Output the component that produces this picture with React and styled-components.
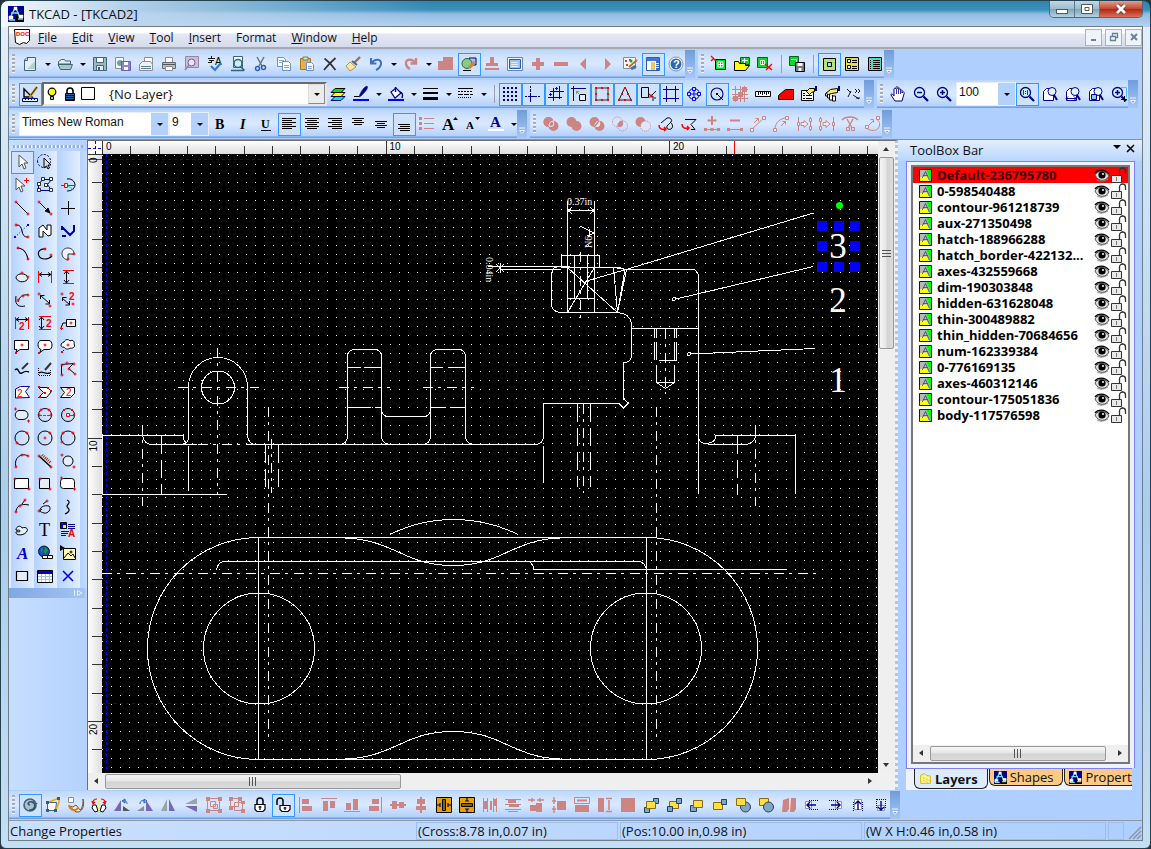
import * as React from "react";
import styled, { createGlobalStyle } from "styled-components";

const GlobalStyle = createGlobalStyle`
    * {
        box-sizing: border-box;
    }
    body {
        margin: 0;
        background: #26323c;
        font-family: "Open Sans", "Noto Sans", sans-serif;
        font-size: 12px;
        color: #111;
    }
    button, select {
        font: inherit;
        color: inherit;
    }
`;

/* ---------- icon drawing ---------- */

const K = "#000";
const N = "#00008c";
const B = "#0000ff";
const R = "#ff0000";
const D = "#cc8583";
const S = "#3f6578";
const L = "#e4eef6";
const W = "#fff";
const Y = "#ffff00";
const GR = "#8a8f96";
const GN = "#00e020";
const VI = "#6a5fa0";
const NO = "none";

const circ = (x, y, r) => `M${x - r} ${y}a${r} ${r} 0 1 0 ${2 * r} 0a${r} ${r} 0 1 0 ${-2 * r} 0z`;
const box = (x, y, w, h) => `M${x} ${y}h${w}v${h}h${-w}z`;
const dots = (points, c = R) => [points.map(([x, y]) => box(x - 1, y - 1, 2, 2)).join(""), NO, c];
const plus = (points) => [points.map(([x, y]) => box(x - 1.5, y - 0.5, 3, 1) + box(x - 0.5, y - 1.5, 1, 3)).join(""), NO, R];

// every entry is [path, stroke, fill, stroke width] or a letter { t, x, y, s, c }
const lens = [
    [circ(6.5, 6.5, 5), N, "#c9f0f4", 1.3],
    ["M10.5 10.5L15 15", N, NO, 2.2],
];
const libBox = [
    [box(4.5, 3.5, 10, 10), K, GN],
    ["M7 6h5v5H7zM9.5 6v5M7 8.5h5", W, "#20a040"],
];
const pageLens = [
    ["M4.500 2.500h7v12h-10v-9z", N, W],
    [circ(10, 5.5, 4), N, "#dff6fa", 1],
    ["M12 9l3 5", N, NO, 2],
];
const yellowBox = (x, y) => [box(x + 0.5, y + 0.5, 9, 7), "#8a6a10", "#ffe040"];
const blueBox = (x, y, s = 5) => [box(x + 0.5, y + 0.5, s - 1, s - 1), "#20425c", "#7fa6c4"];

const icons = {
    newDoc: [["M5 1.500h8.500v13h-11V4z", S, L], ["M2.500 4.500H5.500V1.500", S, NO], ["M5 13h8V5z", NO, "#b4d0cc"]],
    open: [["M1.500 5.500l3-2h3l1 1.500h5v3H1.500z", S, "#dfeeee"], ["M4 8.500h11.500l-2 5H3.500L1 8.500z", S, "#a8c8c4"]],
    save: [[box(1.5, 1.5, 13, 13), S, "#9db9c2"], [box(4.5, 1.5, 7, 5), S, W], [box(4.5, 9.5, 7, 5), S, L], [box(6, 11, 2, 3), NO, S]],
    saveAs: [[box(0.5, 1.5, 8, 11), GR, W], [circ(5, 7, 3), NO, "#6aa0b0"], [box(6.5, 5.5, 9, 9), VI, "#8c86c8"], [box(9, 6, 4, 3) + box(9, 11, 4, 3), NO, W]],
    mail: [["M6.500 1.500h8v7h-8z", GR, W], ["M1.500 8.500l3-3h8l2 3v6h-13z", GR, "#eef2f4"], ["M3 10.500h10M3 12.500h10", "#5b8090", NO]],
    print: [[box(4.5, 1.5, 7, 5), GR, W], [box(1.5, 6.5, 13, 6), "#667", "#b9c0ca"], [box(4.5, 10.5, 7, 4), GR, W], [box(2, 8, 12, 1), NO, "#555"]],
    preview: [[box(1.5, 0.5, 13, 11), "#9a84a4", "#c9bfd8"], [circ(7.5, 6.5, 3.5), VI, "#eae4f4"], ["M5 9l-4 5", "#9a88a8", NO, 2]],
    spell: [["M1 2.500h7M4.500 0v3M2 4.500h5M4.500 5v2M1 6.500h3", K, NO, 0.9], { t: "A", x: 8, y: 9, s: 10, c: K }, ["M4 10l4 4 6-7", "#3a78c8", NO, 2.2]],
    search: [[box(3.5, 0.5, 9, 11), S, W], [circ(8, 7.5, 4), "#2d6585", "#cdeef6", 1.5], ["M10.500 10.500l4 4M1 14.500h13", "#2d6585", NO, 1.6]],
    cut: [["M4 1l5 9M11 1L6 10", "#6b7480", NO, 1.5], [circ(4.5, 12.5, 2), "#2f60b0", NO, 1.5], [circ(10.5, 11.5, 2), "#2f60b0", NO, 1.5]],
    copy: [["M1.500 1.500h6l2 2v7h-8z", "#6a90c8", W], ["M6.500 5.500h6l2 2v7h-8z", "#6a90c8", W], ["M3 4.500h5M3 6.500h4M8 9.500h5M8 11.500h5", "#7fa6de", NO]],
    paste: [[box(1.5, 2.5, 10, 11), "#a87418", "#e8b048"], [box(4, 1, 5, 3), "#777", "#ddd"], ["M7.500 6.500h5l2 2v6h-7z", "#6a90c8", W], ["M9 10.500h4M9 12.500h4", "#7fa6de", NO]],
    remove: [["M2.500 2.500C6 5 10 9 13.500 14M13.500 2C10 5 6 9 2 14", "#333", NO, 1.7]],
    brush: [["M15 1l-6 6", "#a87038", NO, 2.4], ["M5 6l6 5-6 4-4-5z", "#b9923a", "#ffe8a0"], ["M7 5l5 4", "#4a6a88", NO, 2]],
    undo: [["M3 2v5.500h5.500M3.500 7C7 2 14 3 13 8c-.5 3-3 5-5 6", "#3c70c8", NO, 2]],
    redo: [["M13 2v5.500H7.500M12.500 7C9 2 2 3 3 8c.5 3 2 4 4 5", D, NO, 2.4]],
    folderOff: [["M0 5h5V1h10v13H0z", NO, D]],
    render: [[box(8, 2, 7, 7), N, "#a8c4f0"], [circ(6, 7.5, 5), "#286838", "#8cc88c"], ["M14 6l-6 6", "#c88838", NO, 3], ["M2 14.500h8", K, NO]],
    stamp: [["M6 1h4v6h4v3H2V7h4zM1 12h14v2H1z", NO, D]],
    monitor: [[box(0.5, 1.5, 15, 13), "#6886ac", "#f2f6fc"], [box(2.5, 3.5, 11, 9), "#2a5cab", "#9cc2f4"], ["M4 6.500h7M4 8.500h7M4 10.500h7", W, NO, 0.7]],
    zoomInOff: [["M6 2h4v4h4v4h-4v4H6v-4H2V6h4z", NO, D]],
    zoomOutOff: [[box(1, 6, 14, 4), NO, D]],
    prev: [["M10 2v12L4 8z", NO, D]],
    next: [["M6 2v12l6-6z", NO, D]],
    options: [[box(1.5, 1.5, 12, 11), "#8090a0", "#f6f8fc"], [dots([[4, 5], [8, 4], [5, 9]])[0], NO, "#c84818"], [circ(9, 5, 1.5), NO, "#3c8a3c"], ["M15 4l-8 7", "#b07828", NO, 2], ["M9 13l5-3", "#4c70a8", NO, 3]],
    panel: [[box(1.5, 1.5, 13, 13), "#2a5cab", W], [box(2, 2, 12, 3), NO, "#3c78d8"], [box(11, 5, 3, 9), NO, "#3c70c0"], ["M11 7.500h3M11 9.500h3M11 11.500h3", Y, NO], [box(6, 6, 4, 8), NO, "#f0c860"]],
    help: [[circ(8, 8, 7), "#7894b4", W], [circ(8, 8, 5.5), NO, "#2a68b8"], { t: "?", x: 5, y: 12, s: 11, c: W, b: 1 }],
    addLib: [...libBox, ["M0 0l5 5M0 5l3-3", R, NO, 1.2]],
    openLib: [[box(6.5, 1.5, 9, 7), "#006020", GN], ["M8 4.500h6M10.500 2v6", W, NO], ["M.5 14.500v-9h4l1 2h6v2h4l-4 5z", K, Y]],
    delLib: [[box(0.5, 1.5, 10, 10), "#006020", GN], ["M3.500 4.500h4v4h-4zM5.500 4v5", W, "#20a040"], ["M8 8l7 6M15 8l-6 6", R, NO, 1.4]],
    saveLib: [[box(0.5, 0.5, 9, 9), "#006020", GN], ["M2 3.500h5.500V9", W, NO], [box(6.5, 6.5, 9, 9), K, "#777"], [box(8.5, 7, 5, 3) + box(9.5, 12, 3, 3), NO, W]],
    viewLarge: [[box(2.5, 2.5, 12, 12), K, "#b8e080"], [box(6.5, 6.5, 4, 4), K, "#80f0e8"]],
    viewSmall: [[box(1.5, 1.5, 13, 13), K, "#e8e038"], [box(3.5, 3.5, 3, 3) + box(3.5, 9.5, 3, 3), K, W], ["M8 4.500h5M8 6.500h5M8 10.500h5M8 12.500h5", K, NO]],
    viewList: [[box(1.5, 1.5, 13, 13), K, "#50d8c8"], ["M3 4.500h1M6 4.500h7M3 6.500h1M6 6.500h7M3 8.500h1M6 8.500h7M3 10.500h1M6 10.500h7M3 12.500h1M6 12.500h7", K, NO]],

    layerEdit: [["M2 3v8h8z", K, NO, 1.4], ["M15 1L9 9l-1 3", "#c09010", NO, 2.4], ["M15 1L9 9", K, NO, 0.7], [box(0.5, 12.5, 15, 3), N, "#dff"], ["M3.500 12v2M6.500 12v2M9.500 12v2M12.500 12v2", N, NO]],
    bulb: [[circ(8, 6, 3.8), K, Y, 1.2], [box(6.5, 10.5, 3, 3), K, "#d0c060"]],
    padlock: [["M5 7V5a3 3 0 016 0v2", K, NO, 1.6], [box(3.5, 7.5, 9, 7), K, "#1a60b0"], ["M4 9.500h8M4 11.500h8M4 13.500h8", K, NO, 0.8]],
    swatch: [[box(1.5, 1.5, 13, 12), K, W]],
    layers: [["M5 10.500h10l-4 4H1z", N, "#00e0e8"], ["M5 6.500h10l-4 4H1z", K, Y], ["M5 2.500h10l-4 4H1z", K, GN]],
    pen: [["M14 0c2 2-2 6-6 10l-2 1 1-3c2-4 4-7 7-8z", N, N, 0.5], ["M6 10.500H1", K, NO], [box(0, 13, 16, 2), NO, B]],
    bucket: [["M3 6l5-4 5 5-6 5z", N, W, 1.2], ["M7.500 6V1M12 6c3 1 3 3 2 6", N, NO, 1.5], [box(0, 13, 16, 2), NO, B]],
    lines: [["M0 2.500h15", K, NO], [box(0, 6, 15, 2) + box(0, 11, 15, 3), NO, K]],
    dashes: [["M0 2.500h15", K, NO], ["M0 5.500h2M3 5.500h2M6 5.500h2M9 5.500h2M12 5.500h2M0 11.500h1M2 11.500h1M4 11.500h1M6 11.500h1M8 11.500h1M10 11.500h1M12 11.500h1", K, NO], ["M0 8.500h5M6 8.500h5M12 8.500h3", K, NO]],
    grid: [[[0, 4, 8, 12].map((x) => [0, 4, 8, 12].map((y) => box(x + 1, y + 1, 2, 2)).join("")).join(""), NO, N]],
    guide: [["M5.500 0v2M5.500 3v3M5.500 7v9", N, NO], ["M0 10.500h2M3 10.500h9M13 10.500h2", N, NO]],
    snapGrid: [["M5.500 2v13M11.500 0v13M2 5.500h14M0 11.500h14", N, NO], [plus([[2.5, 8.5], [8.5, 2.5]])[0], NO, B]],
    snapCorner: [["M0 2.500h15M2.500 0v15", N, NO], [box(8.5, 8.5, 6, 6), K, L], ["M9 9L5 5M5.500 8V5.500h3", GR, NO]],
    nodes: [[box(2, 2, 12, 12), K, NO, 0.8], dots([[2, 2], [8, 2], [14, 2], [2, 8], [14, 8], [2, 14], [8, 14], [14, 14]])],
    triangle: [["M8 1L2 14h12z", K, NO, 0.9], dots([[8, 2], [5, 8], [11, 8], [2, 14], [8, 14], [14, 14]])],
    snapObject: [["M1.500 1.500h7v10h-7z", K, NO], ["M9 8l3 3M12 8v3H9", R, NO, 1.2], ["M16 5l-4 4M13 10v5M14 12h2", K, NO, 0.9]],
    frame: [["M3.500 0v16M12.500 0v16M0 3.500h16M0 12.500h16", N, NO]],
    wheel: [[circ(8, 8, 5.5), N, NO, 1], [[[8, 3], [8, 13], [3, 8], [13, 8]].map(([x, y]) => box(x - 1.5, y - 1.5, 3, 3)).join(""), B, "#cfe6ff"], ["M8 5v6M5 8h6", B, NO]],
    gauge: [[circ(8, 8, 6), N, NO, 1.1], ["M8 8l6 6", K, NO], dots([[8, 8]], K)],
    tiles: [["M0 3.500h16M0 8.500h16M0 12.500h16M3.500 0v16M8.500 0v16M12.500 0v16", D, NO], [box(1, 10, 5, 5) + box(10, 1, 5, 5) + box(6, 6, 5, 5), NO, D]],
    ruler: [[box(0.5, 5.5, 15, 5), K, W], ["M3.500 6v3M5.500 6v2M7.500 6v3M9.500 6v2M11.500 6v3M13.500 6v2", K, NO]],
    redShape: [["M.5 13.500v-4l7-6h8v10z", K, R]],
    card: [["M.5 4.500h12v10H.5z", K, W], ["M2 7.500h2M5 9.500h6M2 9.500h2M2 12.500h2M5 12.500h6", K, NO], ["M5.500 5.500l3-3h5v3l-3 1-2 2z", K, "#ffe860"], [box(14, 0, 2, 5), NO, N]],
    cards: [["M1.500 7.500l5-4 7-1v4l-6 1-3 1z", K, "#ffe860"], [box(14, 0, 2, 5), NO, N], ["M1.500 8v2h2v2h2v2h3v1h3v-5h-3M3.500 10V8M5.500 12V8M8.500 14V9", K, W]],
    shuffle: [["M0 3l4 4M4 5l-3 6M6 9l6 4M8 3l2 2-2 2M11 3l2 2-2 2M13 12H9", K, NO, 0.9]],
    hand: [["M5 15L1 9c0-2 2-1 3 1V3c0-1 1.600-1 2 0V2c0-2 2-2 2 0v1c0-2 2-1 2 0v1c1-1 2 0 2 1v2c1-2 3-1 2 1l-2 7z", N, W], ["M6.500 3v5M8.500 3v5M10.500 4v4", N, NO, 0.8]],
    zoomOut: [...lens, ["M4 6.500h5", N, NO, 1.5]],
    zoomIn: [...lens, ["M4 6.500h5M6.500 4v5", N, NO, 1.5]],
    zoomActual: [...lens, ["M4.500 4v5M8.500 4v5M6.500 5v1M6.500 7v1", N, NO, 0.8]],
    zoomPage: pageLens,
    zoomWidth: [...pageLens, ["M1 12.500h10M3 10.500l-2 2 2 2M9 10.500l2 2-2 2", N, NO]],
    zoomObjects: [...pageLens, [box(3.5, 8.5, 5, 5), N, "#8ce"]],
    zoomSelection: [...lens, ["M9.500 1.500h6v10", "#38c8f0", NO], ["M4 6.500h5M6.500 4v5", N, NO, 1.5], ["M10 13.500h6M13.500 10v6", K, NO]],

    bold: [{ t: "B", x: 3, y: 13, s: 14, c: K, b: 1, f: 1 }],
    italic: [{ t: "I", x: 5, y: 13, s: 14, c: K, b: 1, f: 1, i: 1 }],
    underline: [{ t: "U", x: 3, y: 12, s: 12, c: K, b: 1, f: 1 }, ["M3 14.500h10", K, NO]],
    alignLeft: [["M1 2.500h14M1 4.500h10M1 6.500h14M1 8.500h10M1 10.500h14M1 12.500h10", K, NO]],
    alignCenter: [["M1 2.500h14M3 4.500h10M1 6.500h14M3 8.500h10M1 10.500h14M3 12.500h10", K, NO]],
    alignRight: [["M1 2.500h14M5 4.500h10M1 6.500h14M5 8.500h10M1 10.500h14M5 12.500h10", K, NO]],
    vTop: [["M2 2.500h12M4 4.500h8M2 6.500h12M4 8.500h8", K, NO]],
    vMiddle: [["M2 5.500h12M4 7.500h8M2 9.500h12M4 11.500h8", K, NO]],
    vBottom: [["M2 8.500h12M4 10.500h10M2 12.500h12M4 14.500h10", K, NO]],
    bullets: [[box(0, 1, 3, 3) + box(0, 6, 3, 3) + box(0, 11, 3, 3) + box(5, 2, 10, 1) + box(5, 7, 10, 1) + box(5, 12, 10, 1), NO, D]],
    fontUp: [{ t: "A", x: 0, y: 14, s: 17, c: K, b: 1, f: 1 }, ["M11 4h5l-2.500-3z", NO, K]],
    fontDown: [{ t: "A", x: 1, y: 13, s: 11, c: K, b: 1, f: 1 }, ["M10 1h5l-2.500 3z", NO, K]],
    fontColor: [{ t: "A", x: 2, y: 11, s: 15, c: N, b: 1, f: 1 }, [box(0, 13, 16, 2), NO, W]],
    boolA: [[circ(5.5, 6, 5) + circ(10.5, 10, 5), NO, D], [circ(5.5, 6, 5), NO, D], ["M6 10a5 5 0 014-5 5 5 0 010 5 5 5 0 01-4 0z", L, D]],
    boolB: [[circ(5.5, 6, 5), NO, D], [circ(10.5, 10, 5), NO, D], [box(5, 5, 6, 6), NO, D]],
    boolC: [[circ(5.5, 6, 5), NO, D], [circ(10.5, 10, 5), NO, D], ["M6 10a5 5 0 014-5 5 5 0 010 5 5 5 0 01-4 0z", L, "#dfeafc"], ["M6 10l4-5", D, NO, 1.5]],
    boolD: [[circ(5.5, 6, 5), D, NO, 1, "1 1"], [circ(10.5, 10, 5), D, NO, 1, "1 1"], ["M6 10a5 5 0 014-5 5 5 0 010 5 5 5 0 01-4 0z", D, D]],
    boolE: [[circ(5.5, 6, 5), NO, D], [circ(10.5, 10, 5), D, "#dce9fd", 1, "1 1"]],
    smooth: [["M3 7l6-5c3-1 6 2 4 4l-4 4c-1 3 2 4 4 3 3-2 1-6-1-7", K, NO, 1], ["M1 9c0 4 3 5 7 4M6 11l2 2-2 2", R, NO, 1.5]],
    corner: [["M4 3.500h11l-5 5 4 5h-4", K, NO, 1], ["M1 8c0 4 3 5 7 4M6 10l2 2-2 2", R, NO, 1.5]],
    addNode: [["M8 0v9M3.500 4.500h9", D, NO, 2], ["M1 13.500h14", D, NO], [box(0, 12, 3, 3) + box(6.5, 12, 3, 3) + box(13, 12, 3, 3), NO, D]],
    delNode: [["M3 4.500h10", D, NO, 2], ["M1 13.500h14", D, NO], [box(0, 12, 3, 3) + box(13, 12, 3, 3), NO, D]],
    toLine: [["M2 13L14 2", D, NO], [box(0.5, 12.5, 3, 3) + box(12.5, 0.5, 3, 3), D, L], ["M4 7l4-4M5.500 2.500h3v3", D, NO]],
    toArc: [["M2 13C2 7 7 2 14 2", D, NO], [box(0.5, 12.5, 3, 3) + box(12.5, 0.5, 3, 3), D, L], ["M8 10l4-4M9.500 5.500h3v3", D, NO]],
    breakNode: [["M2.500 1v14M14.500 1v14", D, NO], [box(1.5, 6.5, 2, 3) + box(13.5, 2.5, 2, 3) + box(13.5, 10.5, 2, 3), D, L], ["M5 6.500h3v-2l4 3.500-4 3.500v-2H5z", D, L]],
    joinNode: [["M1.500 1v14M14.500 1v14", D, NO], [box(0.5, 2.5, 2, 3) + box(0.5, 10.5, 2, 3) + box(13.5, 6.5, 2, 3), D, L], ["M4 6.500h3v-2l4 3.500-4 3.500v-2H4z", D, L]],
    scissors: [["M0 4c4-4 12-4 16 0M5 3l5 9M11 3l-5 9", D, NO, 1.3], [box(4.5, 11.5, 3, 3) + box(9.5, 11.5, 3, 3), D, NO]],
    closeShape: [["M2 11C0 14 12 17 14 11s-2-6-1-8M3 10l6-6M5.500 3.500h3v3", D, NO, 1], [box(0.5, 9.5, 3, 3) + box(11.5, 0.5, 3, 3), D, L]],

    // drawing palette
    select: [["M5 1v12l3-3 2 5 2-1-2-5h4z", "#555", "#f8f8f8"]],
    lasso: [[circ(7, 7, 6.5), N, NO, 1, "2 1.5"], ["M7 4v10l2.500-2 1.500 3 1.500-1-1.500-3h3z", K, "#ddd"]],
    selectAdd: [["M2 1v12l3-3 2 5 2-1-2-5h4z", "#555", "#f8f8f8"], ["M10 3.500h5M12.500 1v5", R, NO]],
    editNodes: [["M6 2.500h9M2 7l4-5M1.500 7v6.500h13l-4-6 4-5", N, NO], [[[6, 2], [14, 2], [2, 7], [2, 13], [9, 8], [14, 13]].map(([x, y]) => box(x - 1.5, y - 1.5, 3, 3)).join(""), K, W, 0.8]],
    compass: [["M7 2c6-1 8 4 8 6s-2 6-8 6", K, NO, 1], ["M1 8.500h14", R, NO], [box(4.5, 6.5, 3, 4), R, W], ["M8 9l6 4", "#00d8e8", NO]],
    line: [["M2 2l12 12", K, NO], plus([[2, 2], [14, 14]])],
    arrow: [["M2 2l10 10", K, NO], ["M13 13L8 11l3-3z", K, K], plus([[2, 2], [14, 14]])],
    cross: [["M8.500 1v14M1 8.500h14", K, NO]],
    bezier: [["M2 2c9-1 3 13 12 12", K, NO], ["M1 14L14 2", B, NO, 1, "1 2"], plus([[2, 2], [14, 14]]), dots([[1, 14], [14, 2]], B)],
    polyline: [["M2 14V5l4-3 4 5V2h4v10l-3 1-5-5v6z", K, W]],
    polyFree: [["M2 3v4M2 4l4 4 4 4 4-4V2M2 13h4", N, NO, 2]],
    arc: [["M3 2c7 0 10 5 11 12", K, NO, 1.1], plus([[4, 2], [14, 13]])],
    ellipseArc: [["M9 3C3 2 0 6 2 10s9 4 13 0", K, NO, 1.1], plus([[8, 3], [14, 9]])],
    pie: [["M8 8h6c0-4-3-6-6-6-8 0-8 11 0 12z", "#333", "#f0f4fa"], plus([[14, 8], [8, 13]])],
    ellipse: [["M2 9c0-4 7-6 11-2 4 5-8 9-11 2z", K, L], plus([[8, 4], [14, 8]])],
    dimH: [["M1.500 2v12M14.500 2v12", R, NO], ["M2 5.500h12M5 3.500L2 5.500l3 2M11 3.500l3 2-3 2", K, NO]],
    dimV: [["M3 1.500h11M3 14.500h11", R, NO], ["M6.500 2v12M4 5l2.500-3L9 5M4 11l2.500 3L9 11", K, NO]],
    tangent: [["M2 4c-2 11 5 11 9 10M4 10C5 5 9 2 14 3", K, NO, 1], plus([[4, 8], [9, 4], [14, 3]])],
    dimAligned: [["M3 3l10 9M3.500 7V3.500h4M12.500 8v4h-4", K, NO], plus([[2, 2], [13, 14]])],
    dimTwo: [["M2 6l8 7M2.500 9V5.500h4M9.500 9v4h-4", K, NO], { t: "2", x: 9, y: 8, s: 10, c: R, b: 1 }, plus([[2, 2], [13, 12]])],
    dimTwoH: [["M1.500 2v12M14.500 2v12", R, NO], ["M2 4.500h12M5 2.500l-3 2 3 2M11 2.500l3 2-3 2", K, NO], { t: "2", x: 5, y: 15, s: 10, c: R, b: 1 }],
    dimTwoV: [["M2 1.500h12M2 14.500h12", R, NO], ["M4.500 2v12M2 5l2.500-3L7 5M2 11l2.500 3L7 11", K, NO], { t: "2", x: 9, y: 12, s: 10, c: R, b: 1 }],
    leader: [["M1 13l2-5h3", K, NO], [box(6.5, 4.5, 9, 7), K, W], plus([[11, 8], [1.5, 13.5]])],
    callout: [["M.5 2.500h14v9H6l-4 3 1-3H.5z", K, W], plus([[8, 7]]), dots([[2, 15]])],
    calloutRound: [["M4 2.500h8c4 0 4 9 0 9H7l-4 3 1-3c-4-1-4-9 0-9z", K, W], plus([[8, 7]]), dots([[2, 15]])],
    calloutCloud: [["M4 4c1-3 5-3 6-1 3-2 5 1 4 3 2 3-2 5-4 4-2 2-5 1-6-1-4 1-4-4 0-5zM3 12l1 1", K, W], plus([[8, 7]]), dots([[2, 14]])],
    brushLine: [["M1 9c4-4 3 5 7 3 3-2 5-2 7-1", K, NO, 1.4], ["M14 2L8 8", "#333", NO, 2]],
    brushDash: [["M1.500 7v7.500h12V9", K, NO, 1, "1 1"], ["M2 12c4-3 5 2 11 0", K, NO, 1.4], ["M14 2L8 9", "#333", NO, 2]],
    polygonNodes: [["M1.500 14V3.500l12-1-5 5 6 5", K, NO], plus([[2, 4], [7, 2], [14, 3], [9, 8], [15, 13], [2, 14]])],
    polyTwo: [["M1.500 14V5l5-2.500h9l-4 5 4 6z", N, W], { t: "2", x: 3, y: 13, s: 10, c: R }],
    polyRed: [["M1.500 3.500h9l4 4-5 6h-8l5-5z", K, W], dots([[2, 3], [11, 4], [14, 7], [8, 9], [3, 13]])],
    polyRedTwo: [["M.5 3.500h14v6l-4 4H.5l4-5z", K, W], { t: "2", x: 6, y: 12, s: 10, c: R }],
    roundEllipse: [["M5 3.500h5c6 1 5 9-1 9H5c-5-1-5-8 0-9z", K, L], plus([[1.5, 2], [14.5, 14]])],
    circleDiameter: [[circ(8, 8, 6.5), K, NO, 1], ["M2 8.500h12", "#00a000", NO, 1, "3 1"], plus([[2, 8], [14, 8], [4, 3], [12, 3]])],
    circleRadius: [[circ(8, 8, 6.5), K, NO, 1], ["M9 8.500h5", "#00a000", NO], [box(6.5, 6.5, 3, 3), R, W], dots([[14, 8], [4, 3], [12, 3]])],
    circleTwo: [[circ(8, 8, 7), K, NO, 1], plus([[3, 13], [13, 3]])],
    circleCenter: [[circ(8, 8, 7), K, NO, 1], plus([[8, 8], [13, 3]])],
    circleThree: [[circ(8, 8, 7), K, NO, 1], plus([[3, 3], [13, 3], [2, 12]])],
    arcThree: [["M2 14C-1 5 8-1 14 3", K, NO, 1], plus([[2, 14], [8, 2], [14, 3]])],
    doubleLine: [["M2 3l12 11", K, NO, 1.4], ["M5 2l9 8", "#a03010", NO, 3, "1 1"], plus([[2, 3], [14, 14]])],
    circleBox: [[circ(8, 8, 5), K, L, 1], plus([[2, 2], [14, 14]])],
    rect: [[box(0.5, 2.5, 14, 10), K, W], plus([[1, 3], [15, 13]])],
    square: [[box(2.5, 2.5, 10, 10), K, L], plus([[3, 3], [13, 13]])],
    roundRect: [["M3.500 2.500h8q3 0 3 3v6q0 1-1 1h-10q-3 0-3-3v-4q0-3 3-3z", K, W], plus([[1.5, 2], [14.5, 13]])],
    curveA: [["M2 13C2 8 6 4 15 6M8 5l3-4", K, NO, 1], plus([[2, 13], [6, 7], [11, 1]])],
    curveB: [["M3 13c-1-5 4-7 9-6 3 3-1 8-5 7s-5-2-2-4M6 5l4-3", K, NO, 1], plus([[2, 12], [10, 2]])],
    squiggle: [["M7 1c6 3-3 5 1 8 3 3-1 5-3 6", K, NO, 1.2]],
    blob: [["M2 8c0-4 5-5 6-2 5-2 6 2 5 3-2 5-12 5-11 1 1-1 4 1 4-1s-3 0-4-1z", K, L]],
    text: [{ t: "T", x: 2, y: 14, s: 18, c: K, f: 1 }],
    richText: [[box(0.5, 0.5, 6, 6), K, B], [box(3, 3, 3, 3), NO, Y], ["M8 2.500h7M8 4.500h7M8 6.500h7M1 9.500h8M1 11.500h7M1 13.500h5", N, NO], { t: "A", x: 8, y: 15, s: 10, c: R, b: 1 }],
    wordArt: [{ t: "A", x: 3, y: 14, s: 17, c: "#0000c8", b: 1, f: 1, i: 1 }],
    hyperlink: [[circ(7, 6.5, 5.5), K, "#1050c0", 0.8], ["M4 3c3 0 2 3 0 5zM8 2l3 3-2 4-2-2z", NO, "#10a020"], ["M5.500 10.500h5v3h-5zM10.500 10.500h5v3h-5z", K, W]],
    picture: [["M0 0l5 3-5 3z", NO, K], [box(3.5, 3.5, 12, 11), K, "#fff8b0"], ["M4 13l4-5 3 3 2-2 2 4", K, NO], [circ(11, 7, 1), K, NO]],
    frameTool: [[box(2.5, 3.5, 11, 9), K, L, 1.2]],
    table: [[box(0.5, 2.5, 15, 12), K, W], [box(1, 3, 14, 3), NO, "#0000c8"], ["M1 8.500h14M1 11.500h14M4.500 6v8M8.500 6v8M12.500 6v8", "#a8c0e0", NO]],
    deleteTool: [["M3 3l10 10M13 3L3 13", "#0000e0", NO, 1.6]],

    // arrange toolbar
    rotateFree: [[circ(8, 8, 6), S, "#a9c0cc", 1.6], ["M8 8c-3 0-2-4 2-3 5 2 3 9-3 8", "#2d5468", NO, 1.6], ["M11 3l5 4h-5z", NO, S]],
    reshape: [["M2.500 5.500h9l-1 8h-8z", S, W], ["M4 5l10-4v4l-3 8", "#f0a010", NO, 1.4], [box(1, 4, 3, 3) + box(12, 0, 3, 3) + box(1, 12, 3, 3) + box(9, 12, 3, 3), NO, "#2d6080"]],
    bend: [[box(0.5, 0.5, 5, 5), GR, W], ["M1 9l4 1 3-2 4 5c3-2 3-8 3-11 2 7-1 14-7 13z", "#705030", L], ["M1 8c1 5 6 7 9 3", "#e07808", NO, 2]],
    flipRotate: [["M2 8l3 0 2 6-3 1-3-4zM14 8l-3 0-2 6 3 1 3-4z", K, W], ["M6 2c-4 0-4 3-4 4M10 2c4 0 4 3 4 4M1 4l1 3 2-2M15 4l-1 3-2-2", R, NO, 1.2], ["M8 2v12", Y, NO]],
    rotateLeft: [["M7 3v11H0z", NO, "#7868b0"], ["M9 14h7l-7-5z", NO, "#555"], ["M9 4c3-1 4 1 4 3M8 4l3-2v4z", "#2a60b0", NO]],
    rotateRight: [["M9 3v11h7z", NO, "#7868b0"], ["M7 14H0l7-5z", NO, GR], ["M3 7c0-3 2-4 5-3M7 2l3 2-3 2z", "#2a60b0", NO]],
    flipH: [["M7 2v12H1z", NO, "#98a4ac"], ["M9 2v12h6z", NO, "#7868b0"]],
    flipV: [["M14 7H2l12-6z", NO, "#98a4ac"], ["M14 9H2l12 6z", NO, "#7868b0"]],
    group: [[box(1.5, 1.5, 12, 12) + box(4.5, 4.5, 5, 5) + box(7.5, 7.5, 4, 4), D, NO], [box(0, 0, 4, 4) + box(12, 0, 4, 4) + box(0, 12, 4, 4) + box(12, 12, 4, 4), NO, D]],
    ungroup: [[box(1.5, 1.5, 8, 8) + box(5.5, 5.5, 8, 8), D, NO], [box(0, 0, 4, 4) + box(9, 0, 4, 4) + box(0, 9, 4, 4) + box(12, 12, 4, 4) + box(12, 4, 4, 3), NO, D]],
    lockShape: [["M5 7V4a3 3 0 016 0v3", K, NO, 1.5], ["M3 7.500h10v5l-2 2H5l-2-2z", K, W, 1.2], ["M8 9v4M6.500 10h3", K, NO, 1.2]],
    unlockShape: [["M2 8V4a3 3 0 016 0v4", K, NO, 1.5], ["M5 8.500h10v4l-2 2H7l-2-2z", K, W, 1.2], ["M10 10v3M8.500 11h3", K, NO, 1.2]],
    aLeft: [[box(1, 0, 1, 16) + box(4, 2, 7, 5) + box(4, 9, 10, 5), NO, D]],
    aTop: [[box(0, 1, 16, 1) + box(2, 4, 5, 10) + box(9, 4, 5, 7), NO, D]],
    aBottom: [[box(0, 14, 16, 1) + box(2, 6, 5, 7) + box(9, 2, 5, 11), NO, D]],
    aRight: [[box(14, 0, 1, 16) + box(5, 2, 7, 5) + box(2, 9, 10, 5), NO, D]],
    aMiddle: [[box(0, 7, 16, 2) + box(2, 4, 5, 8) + box(9, 5, 5, 6), NO, D]],
    aCenter: [[box(7, 0, 2, 16) + box(4, 2, 8, 5) + box(3, 9, 10, 4), NO, D]],
    pageH: [[box(0.5, 0.5, 15, 15), K, "#e8a000"], [box(6.5, 2.5, 3, 11), K, "#806020"], ["M1 8h3M12 8h3M4 6v4M12 6v4", N, NO, 1.2]],
    pageV: [[box(0.5, 0.5, 15, 15), K, "#e8a000"], [box(2.5, 6.5, 11, 3), K, "#806020"], ["M8 1v3M8 12v3M6 4h4M6 12h4", N, NO, 1.2]],
    spaceH: [["M1.500 1v14M5.500 1v14M11.500 1v14M14.500 1v14", D, NO], [box(2, 4, 4, 8) + box(11, 2, 4, 7) + box(8, 4, 2, 9), NO, D]],
    spaceV: [["M0 2.500h16M0 7.500h16M0 12.500h16M3 14.500h10", D, NO], [box(3, 3, 8, 3) + box(4, 8, 10, 2), NO, D]],
    nudgeH: [["M0 3h7M9 3h7M4 1v4M12 1v4", D, NO, 1.4], [box(2, 8, 6, 6) + box(8, 6, 6, 9), NO, D]],
    nudgeV: [["M3 0v7M3 9v7M1 4h4M1 12h4", D, NO, 1.4], [box(6, 4, 9, 9), NO, D]],
    sameW: [[box(0.5, 0.5, 15, 6), D, NO], ["M3 3.500h10", D, NO, 2], [box(1, 8, 14, 7), NO, D]],
    sameH: [[box(1, 1, 6, 14), NO, D], ["M9 1.500h6M9 14.500h6M12 3v10", D, NO, 1.6]],
    sameSize: [[box(1, 1, 14, 14), NO, D]],
    toFront: [blueBox(10, 1, 6), blueBox(1, 10, 6), yellowBox(3, 4)],
    toBack: [yellowBox(3, 4), blueBox(10, 1, 6), blueBox(1, 9, 6)],
    forward: [blueBox(1, 8, 7), yellowBox(4, 3)],
    backward: [yellowBox(1, 5), blueBox(9, 2, 6)],
    above: [[circ(10.5, 10, 5), "#20425c", "#7fa6c4"], yellowBox(1, 1)],
    below: [yellowBox(1, 1), [circ(10.5, 10, 5), "#20425c", "#7fa6c4"]],
    reverse: [["M2 3l6-2v11l-2 3H1zM10 1l5 0v11l-2 3H9z", NO, D]],
    moveLeft: [["M5 3.500h9M5 12.500h9", N, NO, 1, "1 1"], [box(1.5, 4.5, 6, 7), "#8098b8", W], ["M12 8H3M6 5L3 8l3 3", N, NO, 1.4]],
    moveRight: [["M2 3.500h9M2 12.500h9", N, NO, 1, "1 1"], [box(8.5, 4.5, 6, 7), "#8098b8", W], ["M4 8h9M10 5l3 3-3 3", N, NO, 1.4]],
    moveUp: [["M3.500 5v9M12.500 5v9", N, NO, 1, "1 1"], [box(4.5, 2.5, 7, 10), "#8098b8", W], ["M8 13V4M5 7l3-3 3 3", N, NO, 1.4]],
    moveDown: [["M3.500 2v9M12.500 2v9M4 2.500h8", N, NO, 1, "1 1"], [box(4.5, 8.5, 7, 5), "#8098b8", W], ["M8 4v9M5 10l3 3 3-3", N, NO, 1.4]],

    // list and window marks
    layerMark: [[box(0.6, 0.6, 14.8, 14.8), N, "#b8b8b8", 1.2], ["M9 1.200h5.800v13.600z", NO, "#00ff00"], ["M1.200 14.800V10l8-1 4 5.800z", NO, Y], ["M4 11L8 3l5 11M5 8h5", "#3040a0", NO, 1]],
    eye: [["M1 8c3-5 11-5 14 1-3 6-11 6-14-1z", "#555", "#ddd"], [circ(8, 8, 3.6), NO, K], [circ(9, 7, 1), NO, W], ["M1 6C4 2 11 2 15 7", K, NO, 1.4], ["M3 13c3 2 8 1 11-1", "#888", NO]],
    unlock: [["M8.500 8V4a3 3 0 016 0v3", "#333", NO, 1.3], [box(0.5, 8.5, 10, 7), "#333", "#e8e8e8"], ["M5.500 10v4", "#777", NO]],
    app: [[box(0, 0, 16, 16), NO, "#000090"], [box(8, 8, 8, 8), NO, K], ["M1 14l6-12M8 2l4 10M3 7h8M1 14h6M10 13h5", "#70e0f8", NO, 1.4], ["M6 1h3v3H6zM1 10h4v3H1zM11 9h4v3h-4z", W, W, 0.5]],
    doc: [["M.5 .5h15v11l-3 3-3-1-4 2-4-2z", K, W], { t: "DOC", x: 2, y: 7, s: 6, c: R, b: 1 }],
    folder: [["M2 14V4l5-2 2 2 5 1v9z", "#c8b000", "#fff48a"], ["M5 7l8 4M5 10l6 3", "#c8a000", NO, 1, "1 1"]],
};

function Icon({ name, size = 16 }) {
    return (
        <IconSvg viewBox="0 0 16 16" width={size} height={size} aria-hidden="true">
            {icons[name].map((part, index) =>
                Array.isArray(part) ? (
                    <path key={index} d={part[0]} stroke={part[1]} fill={part[2]} strokeWidth={part[3] || 1} strokeDasharray={part[4]} />
                ) : (
                    <text
                        key={index}
                        x={part.x}
                        y={part.y}
                        fontSize={part.s}
                        fill={part.c}
                        fontWeight={part.b ? 700 : 400}
                        fontStyle={part.i ? "italic" : "normal"}
                        fontFamily={part.f ? "Liberation Serif, serif" : "Liberation Sans, sans-serif"}
                    >
                        {part.t}
                    </text>
                )
            )}
        </IconSvg>
    );
}

/* ---------- toolbars ---------- */

// "*" marks a pressed button, "v" a drop-down arrow, "|" a separator
const standardTools = "newDoc v open v save saveAs mail print preview spell search cut copy paste remove brush undo v redo v folderOff *render stamp monitor zoomInOff zoomOutOff prev next options *panel help";
const libraryTools = "addLib openLib delLib | saveLib | *viewLarge viewSmall viewList";
const lineTools = "layers pen v bucket v lines v dashes v | *grid *guide *snapGrid *snapCorner *nodes *triangle *snapObject *frame wheel *gauge tiles ruler redShape card cards shuffle";
const textTools = "bold italic underline *alignLeft alignCenter alignRight vTop vMiddle *vBottom bullets fontUp fontDown fontColor v";
const pathTools = "boolA boolB boolC boolD boolE smooth corner addNode delNode toLine toArc breakNode joinNode scissors closeShape";
const arrangeTools = "*rotateFree reshape bend flipRotate rotateLeft rotateRight flipH flipV group ungroup lockShape *unlockShape aLeft aTop aBottom aRight aMiddle aCenter pageH pageV spaceH spaceV nudgeH nudgeV sameW sameH sameSize toFront toBack forward backward above below reverse moveLeft moveRight moveUp moveDown";
const paletteTools = "*select lasso . selectAdd editNodes compass line arrow cross bezier polyline polyFree arc ellipseArc pie ellipse dimH dimV tangent dimAligned dimTwo dimTwoH dimTwoV leader callout calloutRound calloutCloud brushLine brushDash polygonNodes polyTwo polyRed polyRedTwo roundEllipse circleDiameter circleRadius circleTwo circleCenter circleThree arcThree doubleLine circleBox rect square roundRect curveA curveB squiggle blob text richText wordArt hyperlink picture frameTool table deleteTool";

function Tools({ items }) {
    return items.split(" ").map((item, index) => {
        if (item === "v") {
            return (
                <DropButton key={index} aria-label="More">
                    <Caret />
                </DropButton>
            );
        }
        if (item === "|") return <Separator key={index} />;
        if (item === ".") return <span key={index} />;
        const pressed = item[0] === "*";
        const name = pressed ? item.slice(1) : item;
        return (
            <ToolButton key={index} $pressed={pressed} aria-label={name}>
                <Icon name={name} />
            </ToolButton>
        );
    });
}

function Overflow() {
    return (
        <OverflowButton aria-label="Toolbar options">
            <svg width="6" height="8" viewBox="0 0 6 8">
                <path d="M0 1h6M.5 3.500h5L3 6.500z" stroke="#eef5ff" fill="#7fa8e0" />
            </svg>
        </OverflowButton>
    );
}

/* ---------- drawing area ---------- */

const rulerSteps = Array.from({ length: 60 }, (_, i) => i);

function TopRuler() {
    return (
        <TopRulerBox>
            {rulerSteps.map((i) => (
                <path key={i} d={`M${Math.round(i * 28.35) + 0.5} ${i % 10 ? 5 : 0}V13`} stroke="#333" />
            ))}
            <path d="M632.500 0v13" stroke="#f00" />
            {[0, 10, 20].map((n) => (
                <text key={n} x={n * 28.35 + 4} y="9" fontSize="10">{n}</text>
            ))}
        </TopRulerBox>
    );
}

function SideRuler() {
    return (
        <SideRulerBox>
            {rulerSteps.map((i) => (
                <path key={i} d={`M${i % 10 ? 4 : 0} ${Math.round(i * 28.35) + 0.5}H14`} stroke="#333" />
            ))}
            <path d="M0 5.500h14" stroke="#f00" />
            {[0, 10, 20].map((n) => (
                <text key={n} transform={`translate(9 ${n * 28.35 + (n ? 14 : 9)}) rotate(-90)`} fontSize="10">{n}</text>
            ))}
        </SideRulerBox>
    );
}

const solid = [
    "M102.500 494.500V435.500H183.500q0 8 3 6M102.500 494.500H227M142.500 436q2 8 9 8.500M151 444.500h46",
    "M182 444.500q6.500-1 6.500-8V387a29.500 29.500 0 0159 0v49q1 8 8 8.500H534q9.500 0 9.500-8.500V403.500H619l4.500 4.500 5-5-5-4V363q8-1 8-8V323q-2-9.500-14-10.500H560q-8.500-1-8.500-8.500V276q0-8 5-9",
    "M201.500 387.500a16.500 16.500 0 1033 0 16.500 16.500 0 10-33 0",
    "M340 444.500q7.500-1 7.500-8.500V357q0-7.500 7.500-7.500H374q7.500 0 7.500 7.500v79q0 7.500 8 8.500M381.500 409q0 7.500 7.500 7.500H423q7.500 0 7.500-7.500",
    "M423 444.500q7.500-1 7.500-8.500V357q0-7.500 7.500-7.500H458q7.500 0 7.500 7.500v79q0 7.500 8 8.500",
    "M188.500 446v45M543.500 446v37M631.500 328.500h67M698.500 494V277q0-7-6-7.500H626",
    "M698.500 438q2 6 9 5.500 8-1 8.500-8H795.500V494M755.500 436q-1 7-9 8.500H708",
    "M390 534.500a144 144 0 01128 0",
    "M258.500 537.500H646.500a111 111 0 010 222H258.500a111 111 0 010-222M258.500 537.500v222M646.500 537.500v222",
    "M203.500 648.500a55.500 55.500 0 10111 0 55.500 55.500 0 10-111 0M590.500 648.500a55.500 55.500 0 10111 0 55.500 55.500 0 10-111 0",
    "M345 538c30 1 45 11 67 20q18 7.500 41 7.500t41-7.500c22-9 37-19 66-20M345 759c30-1 45-11 67-20q18-7.500 41-7.500t41 7.500c22 9 37 19 66 20",
    "M216.500 570q1-8 8-8.500H639q6 1 7.500 8M528 561.500q4 0 6 8H787",
    "M815 348.500L691 354M813.500 266.500L676 299M813.500 213L626 269.500 585 281.500M687.500 354a1.500 1.500 0 103 0 1.500 1.500 0 10-3 0M672.500 299a1.500 1.500 0 103 0 1.500 1.500 0 10-3 0",
    "M567.500 201V312.500M594.500 201V312.500M568 210.500h26M572 207l-4 3.500 4 3.500M590 207l4 3.500-4 3.500M561.500 267V255.500H599.500V267.500M574.500 255.500v43M587.500 255.500v43M567.500 298.500h27",
    "M488 266.500h82M500 269.500h61M496 264l8 8M504 264l-8 8M500.500 263v10M561 267.500h53l12 2M567.500 267.500l50 45M594.500 267.500l-27 45M613.500 267.500l4 45 9-43M615 267.500h4l6 2-7 40",
    "M580 226l14 7-7 3M589 229v8",
    "M656.500 382.500h18l-9 6zM659 360.500h17.500M656.500 365v17M674.500 365v17",
    "M654.500 329v9M656.500 329v9M674.500 329v9M676.500 329v9M654.500 342v18M656.500 342v18M674.500 342v18M676.500 342v18",
    "M347.500 367.500h13M364 367.500h17M430.500 367.500h12M448 367.500h17M347.500 407.500h23M375 407.500h6M430.500 407.500h15M450 407.500h15",
];

const dashed = [
    "M161.500 436v58M265.500 445v42M278.500 445v42M577.500 404v83M590.500 404v83M737.500 436v59",
];

const centered = [
    "M178 387.500h81M217.500 348V494M142.500 425v81M268.500 407V738M271.500 439v54M339 387.500h51M423 387.500h51M198 444.500h58",
    "M102 573.500H816M583.500 404v89M656.500 407V738M755.500 425v81M580.500 252v66M665.500 329v65",
];

const handles = [[817, 221], [834, 221], [850, 221], [817, 241], [850, 241], [817, 262], [834, 262], [850, 262]];

function Drawing() {
    return (
        <DrawingBox role="img" aria-label="Drawing">
            <defs>
                <pattern id="dots" x="9" y="10" width="9" height="9" patternUnits="userSpaceOnUse">
                    <rect width="1" height="1" fill="#fff" />
                </pattern>
            </defs>
            <rect width="100%" height="100%" fill="url(#dots)" />
            <g transform="translate(-102 -154)" fill="none" stroke="#fff" shapeRendering="crispEdges">
                <path d="M106.500 154V772M102 159.500H877M875.500 154V772M102 703.500H877" stroke="#0000e0" strokeDasharray="3 3" />
                {solid.map((d) => <path key={d} d={d} />)}
                {dashed.map((d) => <path key={d} d={d} strokeDasharray="18 6" />)}
                {centered.map((d) => <path key={d} d={d} strokeDasharray="10 5 3 6" />)}
            </g>
            <g transform="translate(-102 -154)" fill="#fff" fontFamily="Liberation Serif, serif" fontSize="10">
                <text x="567" y="205">0.37in</text>
                <text transform="translate(486 257) rotate(90)">0.04in</text>
                <text transform="translate(592 248) rotate(-90)">N6</text>
                <g fontSize="35" textAnchor="middle">
                    <text x="838" y="258">3</text>
                    <text x="838" y="312">2</text>
                    <text x="838" y="392">1</text>
                </g>
                {handles.map(([x, y]) => <rect key={`${x}-${y}`} x={x} y={y} width="10" height="10" fill="#00f" />)}
                <circle cx="839.500" cy="205.500" r="3.500" fill="#0f0" />
            </g>
        </DrawingBox>
    );
}

function ScrollBar({ vertical, thumb }) {
    return (
        <Scroll $vertical={vertical}>
            <ScrollArrow aria-label="Back">
                <svg width="8" height="8"><path d={vertical ? "M1 6h6L4 2z" : "M6 1v6L2 4z"} fill="#333" /></svg>
            </ScrollArrow>
            <ScrollTrack $vertical={vertical}>
                <Thumb $vertical={vertical} $size={thumb}>
                    <svg width="9" height="9">
                        <path d={vertical ? "M0 1.500h9M0 4.500h9M0 7.500h9" : "M1.500 0v9M4.500 0v9M7.500 0v9"} stroke="#555" />
                    </svg>
                </Thumb>
            </ScrollTrack>
            <ScrollArrow aria-label="Forward">
                <svg width="8" height="8"><path d={vertical ? "M1 2h6L4 6z" : "M2 1v6l4-3z"} fill="#333" /></svg>
            </ScrollArrow>
        </Scroll>
    );
}

/* ---------- page data ---------- */

const menus = ["File", "Edit", "View", "Tool", "Insert", "Format", "Window", "Help"];

const layers = [
    "Default-236795780",
    "0-598540488",
    "contour-961218739",
    "aux-271350498",
    "hatch-188966288",
    "hatch_border-422132...",
    "axes-432559668",
    "dim-190303848",
    "hidden-631628048",
    "thin-300489882",
    "thin_hidden-70684656",
    "num-162339384",
    "0-776169135",
    "axes-460312146",
    "contour-175051836",
    "body-117576598",
];

function App() {
    return (
        <Window>
            <GlobalStyle />
            <TitleBar>
                <Icon name="app" />
                <Title>TKCAD - [TKCAD2]</Title>
                <WindowButtons>
                    <WindowButton aria-label="Minimize">
                        <svg width="14" height="12"><rect x="1.500" y="6.500" width="11" height="4" fill="#fff" stroke="#555" /></svg>
                    </WindowButton>
                    <WindowButton aria-label="Maximize">
                        <svg width="14" height="12"><path d="M1.500 1.500h11v9h-11zM5 4.500h4v3H5z" fill="#fff" stroke="#555" /></svg>
                    </WindowButton>
                    <WindowButton $close aria-label="Close">
                        <svg width="14" height="12"><path d="M3 2l8 8M11 2l-8 8" stroke="#5b3030" strokeWidth="4.500" /><path d="M3 2l8 8M11 2l-8 8" stroke="#fff" strokeWidth="2.800" /></svg>
                    </WindowButton>
                </WindowButtons>
            </TitleBar>

            <Client>
                <MenuBar>
                    <Icon name="doc" />
                    <MenuList>
                        {menus.map((menu) => (
                            <MenuButton key={menu}>
                                {menu === "Format" ? menu : <><u>{menu[0]}</u>{menu.slice(1)}</>}
                            </MenuButton>
                        ))}
                    </MenuList>
                    <ChildButton aria-label="Minimize document"><svg width="10" height="10"><path d="M2 8h5" stroke="#6b8196" strokeWidth="2" /></svg></ChildButton>
                    <ChildButton aria-label="Restore document"><svg width="10" height="10"><path d="M3.500 4V1.500h5v4H7M1.500 4.500h5v4h-5z" stroke="#6b8196" fill="none" strokeWidth="1.300" /></svg></ChildButton>
                    <ChildButton aria-label="Close document"><svg width="10" height="10"><path d="M2 2l6 6M8 2L2 8" stroke="#6b8196" strokeWidth="2" /></svg></ChildButton>
                </MenuBar>

                <ToolRow>
                    <ToolGroup><Grip /><Tools items={standardTools} /><Overflow /></ToolGroup>
                    <ToolGroup><Grip /><Tools items={libraryTools} /><Overflow /></ToolGroup>
                </ToolRow>
                <ToolRow>
                    <ToolGroup>
                        <Grip />
                        <Tools items="*layerEdit" />
                        <LayerCombo>
                            <Icon name="bulb" />
                            <Icon name="padlock" />
                            <Icon name="swatch" />
                            <LayerSelect aria-label="Layer"><option>{"{No Layer}"}</option></LayerSelect>
                            <ComboArrow $raised><Caret /></ComboArrow>
                        </LayerCombo>
                        <Tools items={lineTools} />
                        <Overflow />
                    </ToolGroup>
                    <ToolGroup>
                        <Grip />
                        <Tools items="hand zoomOut zoomIn" />
                        <Combo $width={60}>
                            <ComboSelect aria-label="Zoom"><option>100</option></ComboSelect>
                            <ComboArrow><Caret /></ComboArrow>
                        </Combo>
                        <Tools items="*zoomActual zoomPage zoomWidth zoomObjects zoomSelection" />
                        <Overflow />
                    </ToolGroup>
                </ToolRow>
                <ToolRow>
                    <ToolGroup>
                        <Grip />
                        <Combo $width={150}>
                            <ComboSelect aria-label="Font"><option>Times New Roman</option></ComboSelect>
                            <ComboArrow><Caret /></ComboArrow>
                        </Combo>
                        <Combo $width={40}>
                            <ComboSelect aria-label="Font size"><option>9</option></ComboSelect>
                            <ComboArrow><Caret /></ComboArrow>
                        </Combo>
                        <Tools items={textTools} />
                        <Overflow />
                    </ToolGroup>
                    <ToolGroup><Grip /><Tools items={pathTools} /><Overflow /></ToolGroup>
                </ToolRow>

                <Workspace>
                    <PaletteDock>
                        <PaletteGrip />
                        <Palette><Tools items={paletteTools} /></Palette>
                        <PaletteEnd><svg width="12" height="8"><path d="M1.500 1v6M4.500 1.500v5L9 4z" stroke="#e6f0ff" fill="none" /></svg></PaletteEnd>
                    </PaletteDock>

                    <CanvasArea>
                        <CanvasRow>
                            <CanvasView>
                                <Corner><svg width="14" height="14"><path d="M7.500 0v14M0 7.500h14" stroke="#00f" strokeDasharray="3 2" /></svg></Corner>
                                <TopRuler />
                                <SideRuler />
                                <Drawing />
                            </CanvasView>
                            <ScrollBar vertical thumb={32} />
                        </CanvasRow>
                        <BottomScroll><ScrollBar thumb={39} /></BottomScroll>
                    </CanvasArea>

                    <Toolbox>
                        <ToolboxHeader>
                            <ToolboxTitle>ToolBox Bar</ToolboxTitle>
                            <PlainButton aria-label="Panel menu"><svg width="8" height="8"><path d="M0 1h8L4 5z" /></svg></PlainButton>
                            <PlainButton aria-label="Close panel"><svg width="9" height="9"><path d="M1 1l7 7M8 1L1 8" stroke="#000" strokeWidth="1.600" /></svg></PlainButton>
                        </ToolboxHeader>
                        <ToolboxBody>
                            <LayerBox>
                                <LayerList>
                                    {layers.map((layer, index) => (
                                        <LayerRow key={layer} $selected={index === 0}>
                                            <Icon name="layerMark" size={13} />
                                            <LayerName $selected={index === 0}>{layer}</LayerName>
                                            <Icon name="eye" />
                                            <Icon name="unlock" />
                                        </LayerRow>
                                    ))}
                                </LayerList>
                                <ScrollBar thumb={96} />
                            </LayerBox>
                        </ToolboxBody>
                        <Tabs>
                            <Tab $active><Icon name="folder" size={13} />Layers</Tab>
                            <Tab><Icon name="app" size={13} />Shapes</Tab>
                            <Tab><Icon name="app" size={13} />Property</Tab>
                        </Tabs>
                    </Toolbox>
                </Workspace>

                <ToolRow>
                    <ToolGroup><Grip /><Tools items={arrangeTools} /><Overflow /></ToolGroup>
                </ToolRow>

                <StatusBar>
                    <StatusText>Change Properties</StatusText>
                    <StatusCell $width={202}>(Cross:8.78 in,0.07 in)</StatusCell>
                    <StatusCell $width={242}>(Pos:10.00 in,0.98 in)</StatusCell>
                    <StatusCell $width={242}>(W X H:0.46 in,0.58 in)</StatusCell>
                    <StatusCell $width={16} />
                    <svg width="16" height="18"><path d="M3 17L15 5M7 17l8-8M11 17l4-4" stroke="#8a98a8" strokeWidth="1.500" /></svg>
                </StatusBar>
            </Client>
        </Window>
    );
}

const IconSvg = styled.svg`
    display: block;
    flex-shrink: 0;
    overflow: visible;
`;

const Window = styled.div`
    height: 100vh;
    display: flex;
    flex-direction: column;
    padding: 0 7px 7px;
    border: 1px solid #23414f;
    border-radius: 8px 8px 6px 6px;
    overflow: hidden;
    background:
        linear-gradient(90deg, #f4f9fe 0, rgba(190, 215, 240, 0.9) 130px, rgba(160, 200, 235, 0) 430px) 0 0 / 100% 26px no-repeat,
        linear-gradient(180deg, #2e83ad 0, #3c90ba 9px, #92bde2 13px, #b4d2f2 26px) 0 0 / 100% 26px no-repeat,
        linear-gradient(180deg, #e6f0fa, #a9cdec 60%, #c4dff4);
`;

const TitleBar = styled.header`
    height: 25px;
    flex-shrink: 0;
    display: flex;
    align-items: center;
    gap: 5px;
`;

const Title = styled.h1`
    flex: 1;
    margin: 0;
    font-size: 13px;
    font-weight: 400;
`;

const WindowButtons = styled.div`
    display: flex;
    align-self: flex-start;
    border: 1px solid #4c6a7c;
    border-top: 0;
    border-radius: 0 0 5px 5px;
    overflow: hidden;
`;

const WindowButton = styled.button`
    width: ${(props) => (props.$close ? 42 : 25)}px;
    height: 16px;
    padding: 0;
    display: flex;
    align-items: center;
    justify-content: center;
    border: 0;
    border-right: ${(props) => (props.$close ? "0" : "1px solid #5b7a8c")};
    background: ${(props) =>
        props.$close
            ? "linear-gradient(#e0a090, #c2452e 50%, #b22810 52%, #d8705a)"
            : "linear-gradient(#c0d8e6, #9abccc 50%, #7fa5b8 52%, #b4d2e0)"};
`;

const Client = styled.div`
    flex: 1;
    min-height: 0;
    display: flex;
    flex-direction: column;
    border: 1px solid #6f7d88;
    background: #aecfff;
`;

const MenuBar = styled.nav`
    height: 22px;
    flex-shrink: 0;
    display: flex;
    align-items: center;
    gap: 3px;
    padding-left: 5px;
    border-bottom: 2px solid #a5aab4;
    background: linear-gradient(#fff 0, #fff 6px, #e4e8f4 7px, #d6dbec 100%);
`;

const MenuList = styled.div`
    flex: 1;
    display: flex;
    margin-left: -3px;
`;

const MenuButton = styled.button`
    padding: 2px 7px 0 8px;
    border: 0;
    background: none;
    font-size: 12px;
    line-height: 18px;
`;

const ChildButton = styled.button`
    width: 17px;
    height: 17px;
    padding: 0;
    display: flex;
    align-items: center;
    justify-content: center;
    border: 1px solid #a3b6c8;
    background: #eef4fa;
`;

const ToolRow = styled.div`
    height: 30px;
    flex-shrink: 0;
    display: flex;
    gap: 3px;
    padding: 1px 0;
    background: #aecfff;
`;

const ToolGroup = styled.div`
    height: 28px;
    display: flex;
    align-items: center;
    background: linear-gradient(#bdd7fd, #d3e4fe 30%, #d9e8ff 50%, #b2d0fb 94%, #7ba6e4 95%, #6f9ce0);
`;

const Grip = styled.span`
    width: 3px;
    height: 20px;
    margin: 0 4px 0 3px;
    background: repeating-linear-gradient(#a3adbb 0 2px, #f0f5fc 2px 3px, transparent 3px 4px);
`;

const ToolButton = styled.button`
    width: 23px;
    height: 23px;
    padding: 0 1px 1px 0;
    flex-shrink: 0;
    display: flex;
    align-items: center;
    justify-content: center;
    border: 1px solid ${(props) => (props.$pressed ? "#3399ff" : "transparent")};
    background: ${(props) => (props.$pressed ? "#cfe2fb" : "none")};
`;

const DropButton = styled.button`
    width: 12px;
    height: 22px;
    padding: 0;
    display: flex;
    align-items: center;
    justify-content: center;
    border: 0;
    background: none;
`;

const Caret = styled.span`
    border: 3px solid transparent;
    border-top-color: #000;
    border-bottom: 0;
`;

const Separator = styled.span`
    width: 1px;
    height: 18px;
    margin: 0 4px;
    background: #9a9fa8;
`;

const OverflowButton = styled.button`
    width: 10px;
    height: 28px;
    margin-left: -3px;
    padding: 0 0 3px;
    display: flex;
    align-items: flex-end;
    justify-content: center;
    border: 0;
    background: linear-gradient(#6f9cda, #86aee6 40%, #a6c6f4);
`;

const LayerCombo = styled.div`
    width: 285px;
    height: 24px;
    display: flex;
    align-items: center;
    gap: 2px;
    border: 2px solid;
    border-color: #6a6a6a #e8e8e8 #e8e8e8 #6a6a6a;
    background: #fff;
`;

const LayerSelect = styled.select`
    flex: 1;
    min-width: 0;
    padding: 0 0 0 11px;
    border: 0;
    background: none;
    appearance: none;
    font-size: 13px;
`;

const Combo = styled.div`
    width: ${(props) => props.$width}px;
    height: 24px;
    flex-shrink: 0;
    display: flex;
    border: 1px solid #e6effc;
    background: #fff;
`;

const ComboSelect = styled.select`
    flex: 1;
    min-width: 0;
    padding: 0 0 4px 2px;
    border: 0;
    background: none;
    appearance: none;
    font-family: "Liberation Sans", sans-serif;
`;

const ComboArrow = styled.span`
    width: 17px;
    align-self: stretch;
    flex-shrink: 0;
    display: flex;
    align-items: center;
    justify-content: center;
    pointer-events: none;
    border: ${(props) => (props.$raised ? "1px outset #ddd" : "0")};
    background: ${(props) => (props.$raised ? "#ececec" : "#b3d1fb")};
`;

const Workspace = styled.main`
    flex: 1;
    min-height: 0;
    display: flex;
    border-top: 1px solid #8a8f98;
`;

const PaletteDock = styled.aside`
    width: 78px;
    flex-shrink: 0;
    padding-top: 5px;
    background: linear-gradient(90deg, #c6deff, #b4d2fd);
`;

const PaletteGrip = styled.div`
    height: 3px;
    margin: 0 4px 3px 4px;
    background: repeating-linear-gradient(90deg, #a3adbb 0 2px, #f0f5fc 2px 3px, transparent 3px 4px);
`;

const Palette = styled.div`
    display: grid;
    grid-template-columns: repeat(3, 23px);
    grid-auto-rows: 23px;
    padding-left: 2px;
    background: repeating-linear-gradient(90deg, #b5d3fe 2px, #e2eefe 25px);
`;

const PaletteEnd = styled.div`
    height: 10px;
    margin-right: 2px;
    display: flex;
    align-items: center;
    justify-content: flex-end;
    background: linear-gradient(90deg, #7fa8e4, #a3c4f4);
`;

const CanvasArea = styled.section`
    flex: 1;
    min-width: 0;
    display: flex;
    flex-direction: column;
    border: 1px solid #6e6e6e;
    border-right: 3px dotted #b4c6dc;
    border-bottom: 0;
    background: #f0f0f0;
`;

const CanvasRow = styled.div`
    flex: 1;
    min-height: 0;
    display: flex;
`;

const CanvasView = styled.div`
    flex: 1;
    min-width: 0;
    display: grid;
    grid-template-columns: 14px minmax(0, 1fr);
    grid-template-rows: 13px minmax(0, 1fr);
`;

const Corner = styled.div`
    overflow: hidden;
    background: #fff;
`;

const TopRulerBox = styled.svg`
    width: 100%;
    height: 13px;
    background: linear-gradient(#fff, #ddd);
    font-family: "Liberation Sans", sans-serif;
`;

const SideRulerBox = styled.svg`
    width: 14px;
    height: 100%;
    background: linear-gradient(90deg, #fff, #ddd);
    font-family: "Liberation Sans", sans-serif;
`;

const DrawingBox = styled.svg`
    display: block;
    width: 100%;
    height: 100%;
    background: #000;
`;

const BottomScroll = styled.div`
    padding-right: 17px;
`;

const Scroll = styled.div`
    display: flex;
    flex-direction: ${(props) => (props.$vertical ? "column" : "row")};
    ${(props) => (props.$vertical ? "width" : "height")}: 17px;
    flex-shrink: 0;
    background: #efefef;
`;

const ScrollArrow = styled.button`
    width: 16px;
    height: 16px;
    flex-shrink: 0;
    padding: 0;
    display: flex;
    align-items: center;
    justify-content: center;
    border: 0;
    background: none;
`;

const ScrollTrack = styled.div`
    flex: 1;
    min-width: 0;
    min-height: 0;
`;

const Thumb = styled.div`
    ${(props) => (props.$vertical ? "height" : "width")}: ${(props) => props.$size}%;
    ${(props) => (props.$vertical ? "width" : "height")}: 15px;
    margin: ${(props) => (props.$vertical ? "0 1px" : "1px")};
    display: flex;
    align-items: center;
    justify-content: center;
    border: 1px solid #989898;
    border-radius: 2px;
    background: linear-gradient(${(props) => (props.$vertical ? "90deg" : "180deg")}, #f5f5f5, #e6e6e6 48%, #d2d2d2 52%, #dcdcdc);
`;

const Toolbox = styled.aside`
    width: 244px;
    flex-shrink: 0;
    display: flex;
    flex-direction: column;
    background: #aecfff;
`;

const ToolboxHeader = styled.div`
    height: 21px;
    display: flex;
    align-items: flex-start;
    gap: 5px;
    padding: 0 7px 0 12px;
    background: linear-gradient(#e2eefe, #b9d6fd);
`;

const ToolboxTitle = styled.h2`
    flex: 1;
    margin: 0;
    font-size: 13px;
    font-weight: 400;
    line-height: 21px;
`;

const PlainButton = styled.button`
    padding: 4px 0 0;
    border: 0;
    background: none;
    line-height: 0;
`;

const ToolboxBody = styled.div`
    flex: 1;
    min-height: 0;
    display: flex;
    margin: 0 7px 0 8px;
    padding: 3px 4px 4px;
    border: 1px solid #7f7ff0;
    border-bottom: 0;
    background: #eef3fb;
`;

const LayerBox = styled.div`
    flex: 1;
    min-width: 0;
    display: flex;
    flex-direction: column;
    border: 2px solid #777;
    background: #fff;
`;

const LayerList = styled.ul`
    flex: 1;
    margin: 0;
    padding: 0;
    list-style: none;
`;

const LayerRow = styled.li`
    height: 16px;
    display: flex;
    align-items: center;
    gap: 1px;
    padding: 0 1px 0 6px;
    background: ${(props) => (props.$selected ? "#ff0000" : "none")};
`;

const LayerName = styled.span`
    flex: 1;
    padding-left: 4px;
    white-space: nowrap;
    font-size: 13px;
    font-weight: 700;
    line-height: 16px;
    color: ${(props) => (props.$selected ? "#400" : "#000")};
`;

const Tabs = styled.div`
    height: 22px;
    display: flex;
    align-items: flex-start;
    gap: 1px;
    margin: 0 10px 0 8px;
    padding-left: 8px;
    overflow: hidden;
    border-top: 1px solid #7f7ff0;
    background: #eef3fb;
`;

const Tab = styled.button`
    height: ${(props) => (props.$active ? 20 : 17)}px;
    flex-shrink: 0;
    display: flex;
    align-items: center;
    gap: 3px;
    padding: 0 9px 0 4px;
    border: 1px solid #222;
    border-top: 0;
    border-radius: 0 0 6px 6px;
    background: ${(props) => (props.$active ? "#dcebff" : "#fcca84")};
    font-size: 13px;
    font-weight: ${(props) => (props.$active ? 700 : 400)};
`;

const StatusBar = styled.footer`
    height: 20px;
    flex-shrink: 0;
    display: flex;
    align-items: center;
    gap: 2px;
    padding-left: 1px;
    border-top: 1px solid #8e98a6;
    background: linear-gradient(90deg, #c9dffe, #aecfff);
    font-size: 13px;
`;

const StatusText = styled.span`
    flex: 1;
`;

const StatusCell = styled.span`
    width: ${(props) => props.$width}px;
    height: 18px;
    padding-left: 1px;
    border: 1px solid #98c0f6;
    line-height: 16px;
`;

export default App;
